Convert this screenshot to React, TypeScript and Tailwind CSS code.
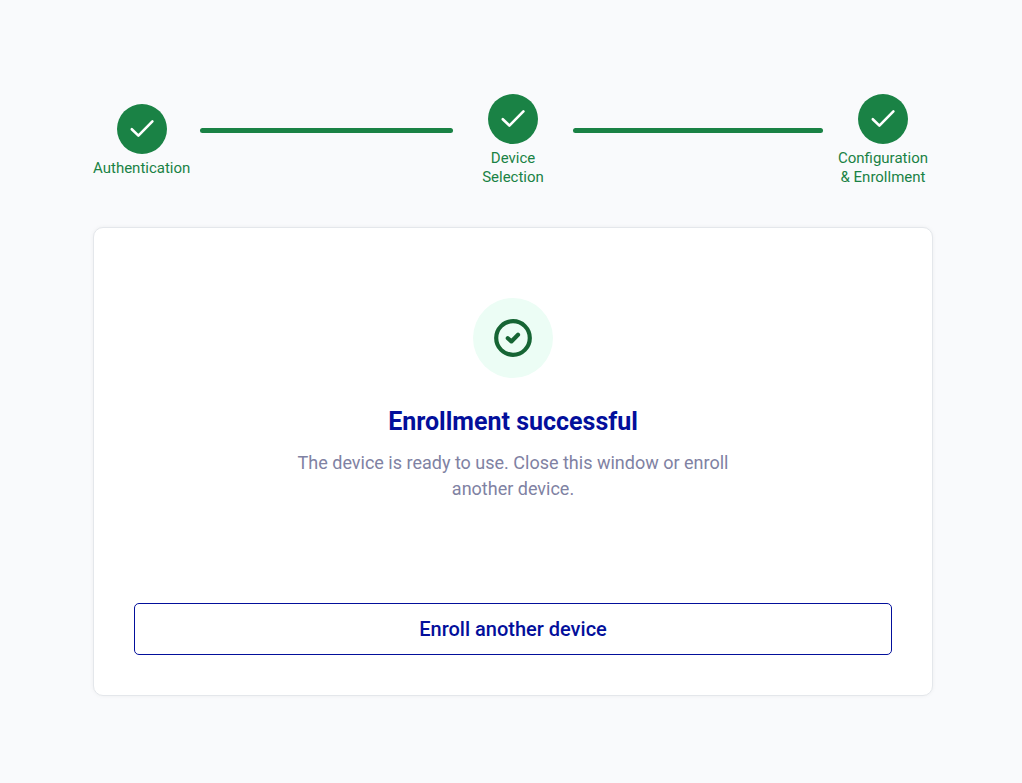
import clsx from "clsx";

interface StepProps {
  label: string;
  className?: string;
}

const CheckMark = () => (
  <svg className="h-full w-full" viewBox="0 0 50 50" fill="none" aria-hidden="true">
    <path
      d="M14.8 25.2L21.4 31.6L35.4 17.4"
      stroke="currentColor"
      strokeWidth="2.6"
      strokeLinecap="round"
      strokeLinejoin="round"
    />
  </svg>
);

const SuccessIcon = () => (
  <svg className="h-10 w-10" viewBox="0 0 40 40" fill="none" aria-hidden="true">
    <circle cx="20" cy="20" r="16.8" stroke="currentColor" strokeWidth="4.2" />
    <path
      d="M14.8 20.2L18.4 23.4L25 16.8"
      stroke="currentColor"
      strokeWidth="4.2"
      strokeLinecap="round"
      strokeLinejoin="round"
    />
  </svg>
);

const Step = ({ label, className }: StepProps) => (
  <li className={clsx("flex max-w-25 shrink-0 flex-col items-center gap-[5px]", className)}>
    <span className="h-[50px] w-[50px] rounded-full bg-[#1a8245] text-white">
      <CheckMark />
    </span>
    <span className="text-center text-[15px] leading-[19px] text-[#1a8245]">{label}</span>
  </li>
);

const StepLine = () => (
  <li aria-hidden="true" className="mb-5 h-[5px] flex-1 rounded-full bg-[#1a8245]" />
);

const Stepper = () => (
  <div className="flex items-center">
    <ol className="flex flex-1 items-center gap-2.5 pr-2.5">
      <Step label="Authentication" />
      <StepLine />
    </ol>
    <ol className="flex w-25 justify-center">
      <Step label="Device Selection" className="w-20" />
    </ol>
    <ol className="flex flex-1 items-center gap-2.5 pl-2.5">
      <StepLine />
      <Step label="Configuration & Enrollment" className="w-25" />
    </ol>
  </div>
);

export default function App() {
  return (
    <div className="min-h-screen bg-[#f9fafc] pt-[94px] pr-0 pb-20 pl-1 font-[Roboto,sans-serif]">
      <main className="mx-auto max-w-[840px]">
        <Stepper />
        <section className="mt-10 flex flex-col items-center rounded-[10px] border border-[#e4e7eb] bg-white px-10 pt-[70px] pb-10 shadow-[0_0_4px_rgba(0,0,0,0.05)]">
          <div className="flex h-20 w-20 items-center justify-center rounded-full bg-[#ecfdf5] text-[#166534]">
            <SuccessIcon />
          </div>
          <h1 className="mt-7 text-center text-[25px] leading-8 font-bold text-[#030f9b]">
            Enrollment successful
          </h1>
          <p className="mt-3 max-w-[440px] text-center text-lg leading-[26px] text-[#7f82a3]">
            The device is ready to use. Close this window or enroll another device.
          </p>
          <button
            type="button"
            className="mt-[101px] h-[52px] w-full cursor-pointer rounded-[5px] border border-[#030f9b] bg-white text-xl font-medium text-[#030f9b]"
          >
            Enroll another device
          </button>
        </section>
      </main>
    </div>
  );
}
